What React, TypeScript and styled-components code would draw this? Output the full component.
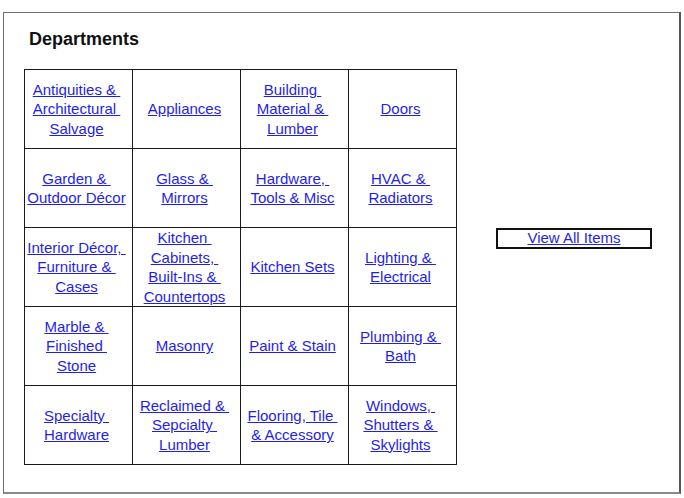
import React from "react";
import styled, { createGlobalStyle } from "styled-components";

const GlobalStyle = createGlobalStyle`
  html, body {
    margin: 0;
    padding: 0;
    background: #ffffff;
    font-family: "Liberation Sans", Arial, sans-serif;
  }
`;

const Frame = styled.div`
  box-sizing: border-box;
  margin: 12px 0 0 3px;
  width: 678px;
  height: 482px;
  border: 1px solid #6e6e6e;
  border-right: 2px solid #555;
  border-bottom: 2px solid #8a8a8a;
  padding: 16px 0 0 20px;
`;

const Heading = styled.h2`
  margin: 0 0 19px 5px;
  font-size: 18px;
  font-weight: bold;
  color: #111;
  line-height: 21px;
`;

const Body = styled.div`
  display: flex;
  align-items: flex-start;
`;

const Grid = styled.div`
  display: grid;
  grid-template-columns: repeat(4, 107px);
  grid-template-rows: repeat(5, 78px);
  gap: 1px;
  padding: 1px;
  background: #1a1a1a;
`;

const Cell = styled.div`
  background: #fff;
  display: flex;
  align-items: center;
  justify-content: center;
  text-align: center;
  padding-right: 4px;
`;

const DeptLink = styled.a`
  font-size: 15px;
  line-height: 19.5px;
  color: #1f1fe8;
  text-decoration: underline;
  white-space: nowrap;
`;

const Side = styled.div`
  padding: 159px 0 0 39px;
`;

const ViewAll = styled.a`
  box-sizing: border-box;
  display: block;
  width: 156px;
  height: 21px;
  border: 2px solid #111;
  font-size: 15px;
  line-height: 16px;
  text-align: center;
  color: #1f1fe8;
  text-decoration: underline;
`;

const departments: string[][] = [
  ["Antiquities &\u00a0", "Architectural\u00a0", "Salvage"],
  ["Appliances"],
  ["Building\u00a0", "Material &\u00a0", "Lumber"],
  ["Doors"],
  ["Garden &\u00a0", "Outdoor Décor"],
  ["Glass &\u00a0", "Mirrors"],
  ["Hardware,\u00a0", "Tools & Misc"],
  ["HVAC &\u00a0", "Radiators"],
  ["Interior Décor,\u00a0", "Furniture &\u00a0", "Cases"],
  ["Kitchen\u00a0", "Cabinets,\u00a0", "Built-Ins &\u00a0", "Countertops"],
  ["Kitchen Sets"],
  ["Lighting &\u00a0", "Electrical"],
  ["Marble &\u00a0", "Finished\u00a0", "Stone"],
  ["Masonry"],
  ["Paint & Stain"],
  ["Plumbing &\u00a0", "Bath"],
  ["Specialty\u00a0", "Hardware"],
  ["Reclaimed &\u00a0", "Sepcialty\u00a0", "Lumber"],
  ["Flooring, Tile\u00a0", "& Accessory"],
  ["Windows,\u00a0", "Shutters &\u00a0", "Skylights"],
];

export default function App() {
  return (
    <>
      <GlobalStyle />
      <Frame>
        <Heading>Departments</Heading>
        <Body>
          <Grid>
            {departments.map((lines, i) => (
              <Cell key={i}>
                <DeptLink href="#">
                  {lines.map((line, j) => (
                    <React.Fragment key={j}>
                      {j > 0 && <br />}
                      {line}
                    </React.Fragment>
                  ))}
                </DeptLink>
              </Cell>
            ))}
          </Grid>
          <Side>
            <ViewAll href="#">View All Items</ViewAll>
          </Side>
        </Body>
      </Frame>
    </>
  );
}
